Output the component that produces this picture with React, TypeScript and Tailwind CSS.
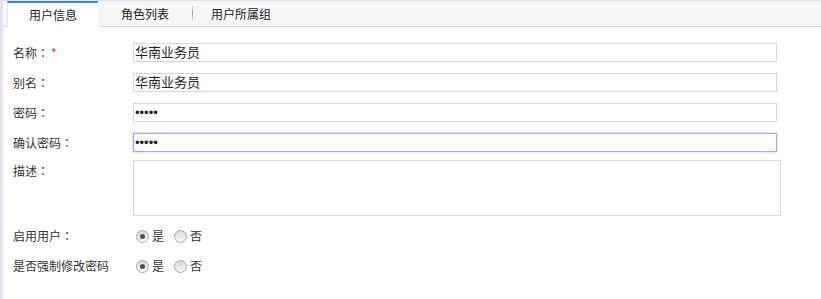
import React from "react";

const tabs = [
  { label: "用户信息", width: "w-[91px]", active: true },
  { label: "角色列表", width: "w-[94px]", active: false },
  { label: "用户所属组", width: "w-[98px]", active: false },
];

const fields = [
  { label: "名称", value: "华南业务员", required: true, type: "text" },
  { label: "别名", value: "华南业务员", type: "text" },
  { label: "密码", value: "12345", type: "password" },
];

// full-width colon centred in its cell, like the original UI font
function Colon() {
  return <span className="font-['Noto_Sans_CJK_TC',sans-serif]">：</span>;
}

function Radio({ checked }: { checked?: boolean }) {
  return (
    <span className="flex h-[13px] w-[13px] items-center justify-center rounded-full border border-[#a8a8a8] bg-gradient-to-b from-[#d9d9d9] to-[#f8f8f8]">
      {checked && <span className="h-[5px] w-[5px] rounded-full bg-[#4d4d4d]" />}
    </span>
  );
}

function RadioRow({ label, colon }: { label: string; colon?: boolean }) {
  return (
    <div className="mt-[10px] flex h-[20px] items-center">
      <div className="w-[120px]">
        {label}
        {colon && <Colon />}
      </div>
      <label className="ml-[3px] flex items-center gap-[3px]">
        <Radio checked />
        <span>是</span>
      </label>
      <label className="ml-[10px] flex items-center gap-[3px]">
        <Radio />
        <span>否</span>
      </label>
    </div>
  );
}

export default function App() {
  return (
    <div className="flex min-h-[299px] bg-white font-['Noto_Sans_CJK_SC',sans-serif] text-[12px] text-[#333]">
      {/* left strip */}
      <div className="w-[3px] shrink-0 bg-[#e4e4ef]" />

      <div className="flex-1">
        {/* Tabs */}
        <div className="flex h-[27px] border-t border-b border-t-[#e0e0ea] border-b-[#dcdcdc] bg-[#f6f6f6] pl-[4px]">
          {tabs.map((t, i) =>
            t.active ? (
              <div
                key={t.label}
                className={`${t.width} relative z-10 flex h-[26px] items-center justify-center border-t-2 border-l border-t-[#4a86cb] border-l-[#e8e8e8] bg-white text-[#222]`}
              >
                {t.label}
              </div>
            ) : (
              <div key={t.label} className={`${t.width} relative flex items-center justify-center text-[#222]`}>
                {i === 2 && (
                  <span className="absolute left-0 top-[3px] h-[19px] w-px bg-gradient-to-b from-transparent via-[#9a9a9a] to-transparent" />
                )}
                {t.label}
              </div>
            )
          )}
        </div>

        {/* Form */}
        <div className="pl-[10px] pt-[16px]">
          {fields.map((f) => (
            <div key={f.label} className="mb-[11px] flex h-[19px] items-center">
              <div className="w-[120px]">
                {f.label}
                <Colon />
                {f.required && <span className="ml-[2px] text-[#e0284a]">*</span>}
              </div>
              <input
                type={f.type}
                defaultValue={f.value}
                className="h-[19px] w-[644px] border border-[#d9d7d1] bg-white px-px font-['Liberation_Sans','Noto_Sans_CJK_SC',sans-serif] text-[13px] text-[#222] outline-none"
              />
            </div>
          ))}

          <div className="mb-[8px] flex h-[19px] items-center">
            <div className="w-[120px]">
              确认密码
              <Colon />
            </div>
            <input
              type="password"
              defaultValue="12345"
              autoFocus
              onFocus={(e) => e.currentTarget.setSelectionRange(5, 5)}
              className="h-[19px] w-[644px] border border-[#8fb1ec] bg-white px-px font-['Liberation_Sans',sans-serif] text-[13px] text-[#222] shadow-[0_0_2px_#a9c5f2] outline-none"
            />
          </div>

          <div className="flex items-start">
            <div className="w-[120px] pt-[2px]">
              描述
              <Colon />
            </div>
            <textarea className="h-[56px] w-[648px] resize-none border border-[#d9d7d1] bg-white outline-none" />
          </div>

          <RadioRow label="启用用户" colon />
          <RadioRow label="是否强制修改密码" />
        </div>
      </div>
    </div>
  );
}
